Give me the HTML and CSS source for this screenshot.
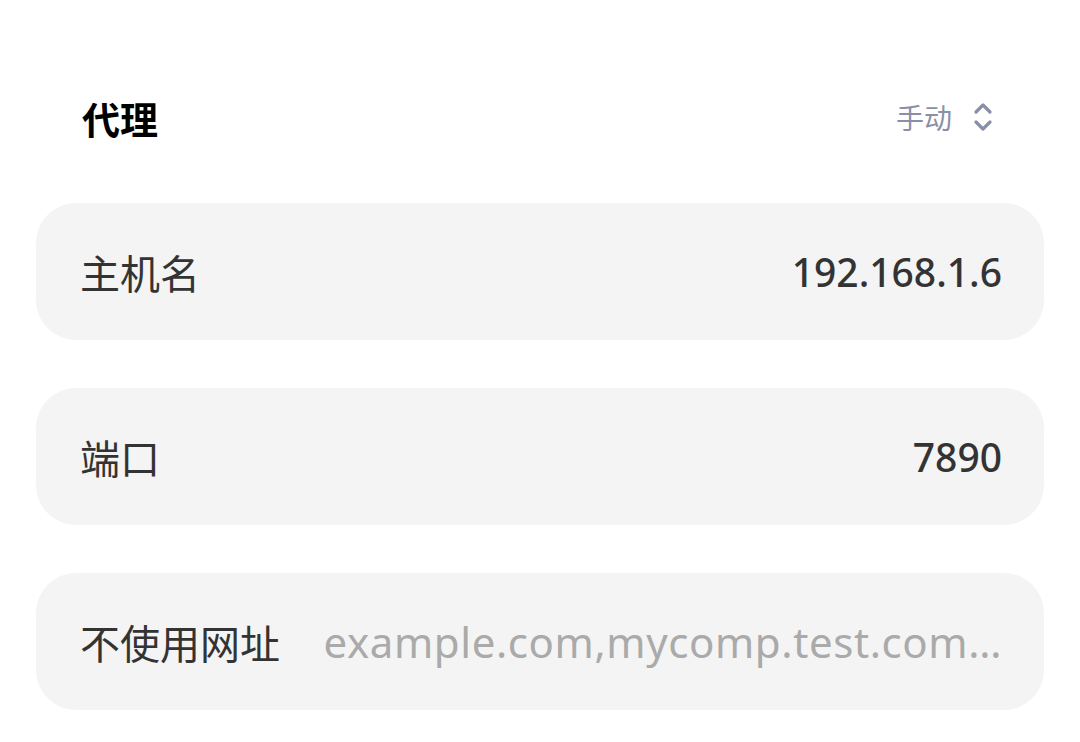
FILE: index.html
```html
<!DOCTYPE html>
<html lang="zh">
<head>
<meta charset="utf-8">
<link rel="stylesheet" href="styles.css">
</head>
<body>
<div class="page">
  <div class="header">
    <div class="title">代理</div>
    <div class="mode">
      <span class="mode-text">手动</span>
      <svg class="chev" width="22" height="32" viewBox="0 0 22 32"><path d="M4 11 L11 4 L18 11 M4 21 L11 28 L18 21" fill="none" stroke="#8a8fa8" stroke-width="3.2" stroke-linecap="round" stroke-linejoin="round"/></svg>
    </div>
  </div>
  <div class="list">
    <div class="card">
      <span class="label">主机名</span>
      <span class="value">192.168.1.6</span>
    </div>
    <div class="card">
      <span class="label">端口</span>
      <span class="value">7890</span>
    </div>
    <div class="card">
      <span class="label">不使用网址</span>
      <span class="value placeholder">example.com,mycomp.test.com…</span>
    </div>
  </div>
</div>
</body>
</html>
```
FILE: styles.css
```css
html, body {
  margin: 0;
  padding: 0;
  background: #ffffff;
}
body {
  font-family: "Noto Sans", "Noto Sans CJK SC", sans-serif;
}
.page {
  padding: 80px 36px 0 36px;
}
.header {
  height: 78px;
  display: flex;
  align-items: center;
  justify-content: space-between;
  padding: 0 50px 0 46px;
}
.title {
  font-size: 38px;
  font-weight: 700;
  color: #000;
  margin-top: -4px;
}
.mode {
  display: flex;
  align-items: center;
  gap: 20px;
  margin-top: -4px;
}
.mode-text {
  font-size: 28px;
  color: #8a8fa8;
}
.chev {
  display: block;
}
.list {
  margin-top: 45px;
  display: flex;
  flex-direction: column;
  gap: 48px;
}
.card {
  height: 137px;
  background: #f4f4f4;
  border-radius: 40px;
  display: flex;
  align-items: center;
  padding: 0 42px 0 44px;
  gap: 40px;
}
.label {
  font-size: 40px;
  color: #333;
  white-space: nowrap;
  flex-shrink: 0;
}
.value {
  margin-left: auto;
  font-size: 39px;
  font-weight: 500;
  color: #333;
  white-space: nowrap;
  min-width: 0;
}
.placeholder {
  color: #aaaaaa;
  font-weight: 400;
  font-size: 42px;
  letter-spacing: 0.6px;
  text-align: right;
}
```
